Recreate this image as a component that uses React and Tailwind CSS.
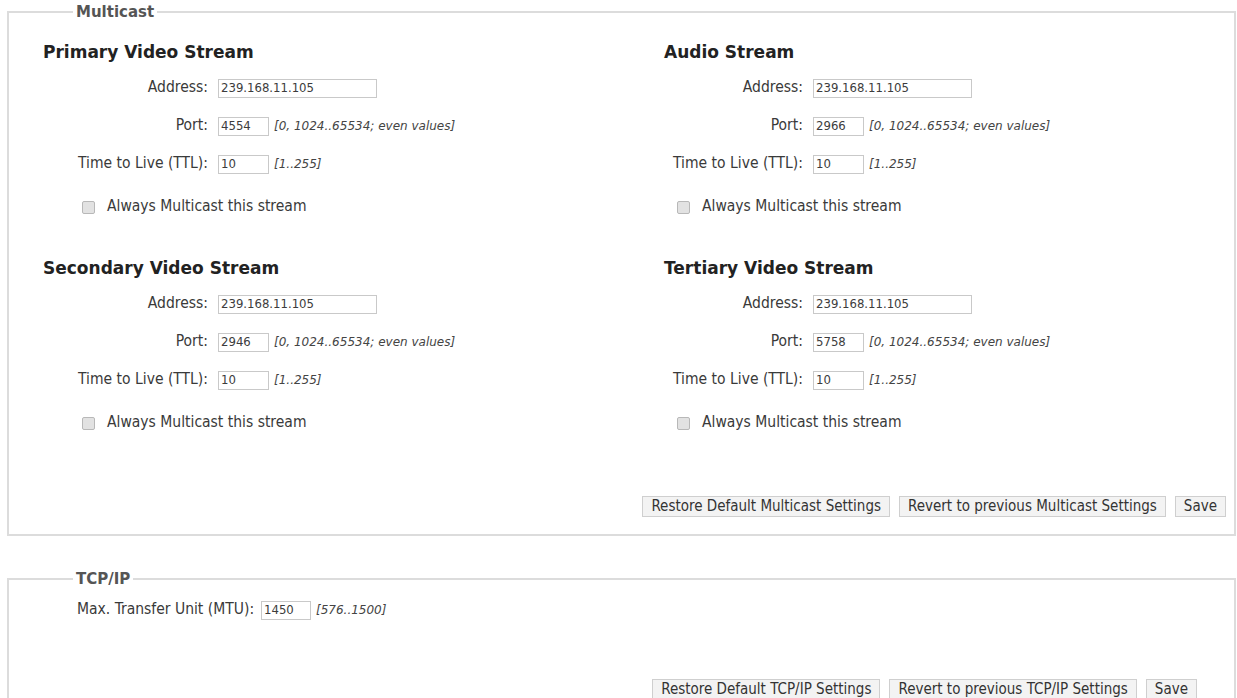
const verdana = "font-['DejaVu_Sans','Verdana',sans-serif]";
const tahoma = "font-['DejaVu_Sans_Condensed','Liberation_Sans',sans-serif]";

function Field({ label, value, wide, hint }) {
  return (
    <div className="flex h-[38px] items-center">
      <span className="w-[140px] shrink-0 whitespace-nowrap pr-[10px] text-right">{label}</span>
      <input
        readOnly
        value={value}
        className={`h-[19px] ${wide ? "w-[159px]" : "w-[51px]"} border border-[#c9c9c9] bg-white px-[2px] text-[13px] text-[#3c3c3c] outline-none ${tahoma}`}
      />
      {hint && <span className={`ml-[5px] whitespace-nowrap text-[12px] italic text-[#444] ${verdana}`}>{hint}</span>}
    </div>
  );
}

function Stream({ title, address, port, indent }) {
  return (
    <div>
      <h3 className={`h-[20px] text-[17px] font-bold leading-[20px] text-[#222] ${verdana}`}>{title}</h3>
      <div className={`mt-[7px] ${indent}`}>
        <Field label="Address:" value={address} wide />
        <Field label="Port:" value={port} hint="[0, 1024..65534; even values]" />
        <Field label="Time to Live (TTL):" value="10" hint="[1..255]" />
        <div className="mt-[5px] flex h-[38px] items-center pl-[4px]">
          <span className="h-[13px] w-[13px] rounded-[2px] border border-[#b8b8b8] bg-[#e2e2e2]"></span>
          <span className="ml-[12px] whitespace-nowrap">Always Multicast this stream</span>
        </div>
      </div>
    </div>
  );
}

function Btn({ children }) {
  return (
    <button className="h-[21px] whitespace-nowrap border border-[#cfcfcf] bg-[#f3f3f3] px-[8px] text-[15px] leading-[19px] text-[#333]">
      {children}
    </button>
  );
}

export default function App() {
  return (
    <div className={`min-h-screen bg-white pt-[3px] text-[15.5px] text-[#3a3a3a] ${tahoma}`}>
      <fieldset className="ml-[7px] mr-[1px] border-2 border-[#dcdcdc] pb-[17px] pl-[34px] pt-[21px]">
        <legend className={`ml-[30px] px-[3px] text-[15px] font-bold leading-[18px] text-[#555] ${verdana}`}>
          Multicast
        </legend>
        <div className="grid grid-cols-[621px_1fr] gap-y-[32px]">
          <Stream title="Primary Video Stream" address="239.168.11.105" port="4554" indent="ml-[35px]" />
          <Stream title="Audio Stream" address="239.168.11.105" port="2966" indent="ml-[9px]" />
          <Stream title="Secondary Video Stream" address="239.168.11.105" port="2946" indent="ml-[35px]" />
          <Stream title="Tertiary Video Stream" address="239.168.11.105" port="5758" indent="ml-[9px]" />
        </div>
        <div className="mt-[54px] flex justify-end gap-[9px] pr-[8px]">
          <Btn>Restore Default Multicast Settings</Btn>
          <Btn>Revert to previous Multicast Settings</Btn>
          <Btn>Save</Btn>
        </div>
      </fieldset>

      <fieldset className="ml-[7px] mr-[1px] mt-[34px] border-2 border-[#dcdcdc] pb-[20px] pl-[34px] pt-[12px]">
        <legend className={`ml-[30px] px-[3px] text-[15px] font-bold leading-[18px] text-[#555] ${verdana}`}>
          TCP/IP
        </legend>
        <div className="flex h-[20px] items-center pl-[34px]">
          <span className="w-[184px] shrink-0 whitespace-nowrap">Max. Transfer Unit (MTU):</span>
          <input
            readOnly
            value="1450"
            className={`h-[19px] w-[50px] border border-[#c9c9c9] bg-white px-[2px] text-[13px] text-[#3c3c3c] outline-none ${tahoma}`}
          />
          <span className={`ml-[5px] text-[12px] italic text-[#444] ${verdana}`}>[576..1500]</span>
        </div>
        <div className="mt-[59px] flex justify-end gap-[9px] pr-[37px]">
          <Btn>Restore Default TCP/IP Settings</Btn>
          <Btn>Revert to previous TCP/IP Settings</Btn>
          <Btn>Save</Btn>
        </div>
      </fieldset>
    </div>
  );
}
